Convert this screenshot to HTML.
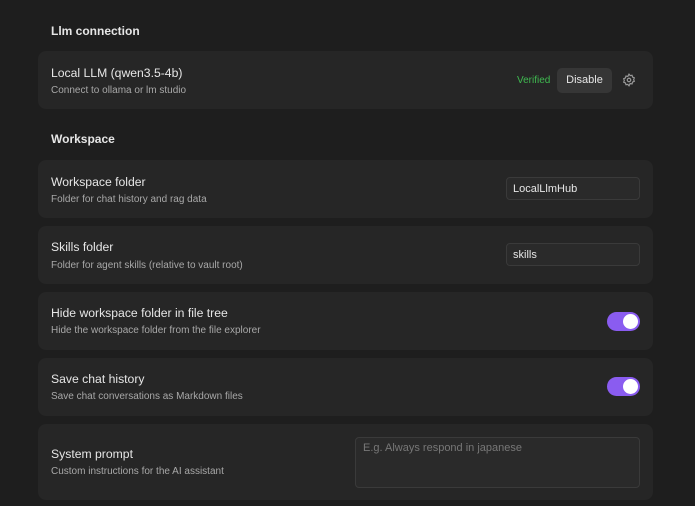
<!DOCTYPE html><html><head><style>
body{margin:0;width:695px;height:506px;background:#1e1e1e;font-family:"Liberation Sans",sans-serif;color:#dcdcdc;position:relative;overflow:hidden}
.h{position:absolute;left:51px;font-size:12px;font-weight:bold;color:#e6e6e6}
.c{position:absolute;left:38px;width:615px;background:#262626;border-radius:8px}
.t{position:absolute;left:13px;font-size:12.2px;color:#e6e6e6}
.d{position:absolute;left:13px;font-size:10px;color:#a8a8a8}
.in{position:absolute;left:468px;width:134px;height:23px;background:#2a2a2a;border:1px solid #3a3a3a;border-radius:4px;box-sizing:border-box;font-size:11px;color:#e6e6e6;padding:5px 6px}
.tg{position:absolute;left:569px;width:33px;height:19px;border-radius:10px;background:#8a5cf0}
.tg:after{content:"";position:absolute;right:2px;top:2px;width:15px;height:15px;border-radius:50%;background:#fff}
</style></head><body>
<div class="h" style="top:24px">Llm connection</div>
<div class="c" style="top:51px;height:58px">
<div class="t" style="top:15px">Local LLM (qwen3.5-4b)</div>
<div class="d" style="top:34px">Connect to ollama or lm studio</div>
<div style="position:absolute;left:479px;top:24px;font-size:10px;color:#3fb950">Verified</div>
<div style="position:absolute;left:519px;top:17px;width:55px;height:25px;background:#363636;border-radius:5px;font-size:11px;color:#e6e6e6;text-align:center;line-height:25px">Disable</div>
<svg style="position:absolute;left:584px;top:22px" width="14" height="14" viewBox="0 0 24 24" fill="none" stroke="#9a9a9a" stroke-width="2"><path d="M12 2l2 2.5 3.2-.6.9 3.1 3 1.3-1.1 3 1.1 3-3 1.3-.9 3.1-3.2-.6L12 22l-2-2.5-3.2.6-.9-3.1-3-1.3 1.1-3-1.1-3 3-1.3.9-3.1 3.2.6z"/><circle cx="12" cy="12" r="3"/></svg>
</div>
<div class="h" style="top:132px">Workspace</div>
<div class="c" style="top:160px;height:58px">
<div class="t" style="top:15px">Workspace folder</div><div class="d" style="top:34px">Folder for chat history and rag data</div>
<div class="in" style="top:17px">LocalLlmHub</div></div>
<div class="c" style="top:226px;height:58px">
<div class="t" style="top:14px">Skills folder</div><div class="d" style="top:34px">Folder for agent skills (relative to vault root)</div>
<div class="in" style="top:17px">skills</div></div>
<div class="c" style="top:292px;height:58px">
<div class="t" style="top:14px">Hide workspace folder in file tree</div><div class="d" style="top:33px">Hide the workspace folder from the file explorer</div>
<div class="tg" style="top:20px"></div></div>
<div class="c" style="top:358px;height:58px">
<div class="t" style="top:14px">Save chat history</div><div class="d" style="top:33px">Save chat conversations as Markdown files</div>
<div class="tg" style="top:19px"></div></div>
<div class="c" style="top:424px;height:76px">
<div class="t" style="top:23px">System prompt</div><div class="d" style="top:42px">Custom instructions for the AI assistant</div>
<div style="position:absolute;left:317px;top:13px;width:285px;height:51px;background:#2a2a2a;border:1px solid #3a3a3a;border-radius:4px;box-sizing:border-box;font-size:11px;color:#777;padding:4px 7px">E.g. Always respond in japanese</div></div>
</body></html>
